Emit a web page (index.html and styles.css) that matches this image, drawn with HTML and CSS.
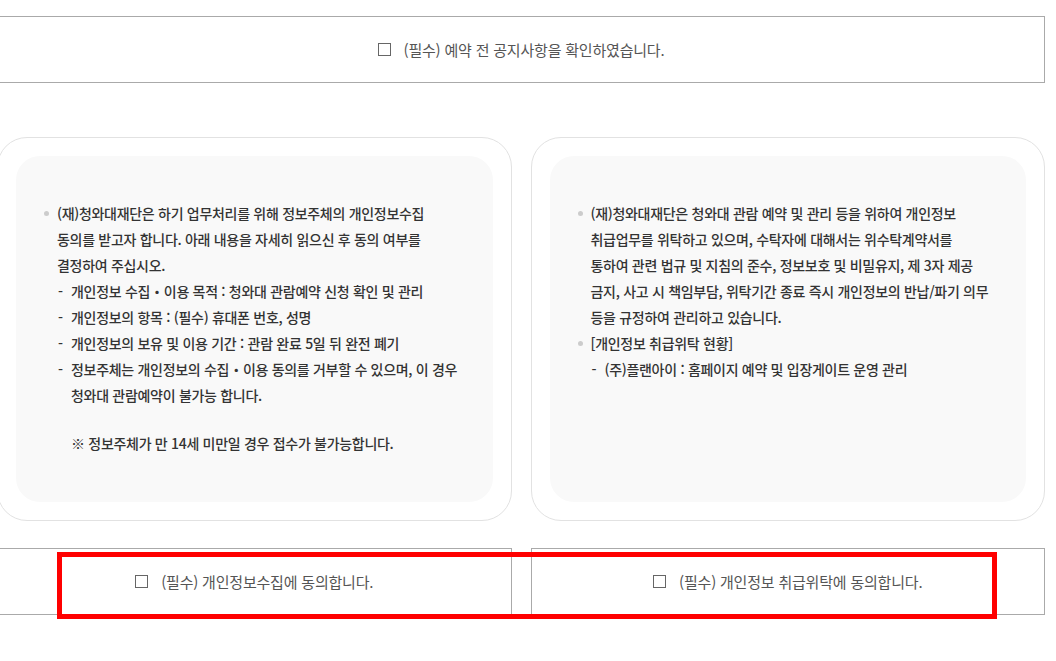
FILE: index.html
```html
<!DOCTYPE html>
<html lang="ko">
<head>
  <meta charset="UTF-8" />
  <meta name="viewport" content="width=device-width, initial-scale=1" />
  <title>청와대 관람예약 – 약관 동의</title>
  <link rel="stylesheet" href="styles.css">
</head>
<body>

  <div class="wrap">
    <label class="agree agree-top">
      <input type="checkbox" class="check" />
      <span>(필수) 예약 전 공지사항을 확인하였습니다.</span>
    </label>

    <div class="terms">
      <div class="card">
        <div class="card-inner">
          <ul class="dot-list">
            <li>
              (재)청와대재단은 하기 업무처리를 위해 정보주체의 개인정보수집<br>
              동의를 받고자 합니다. 아래 내용을 자세히 읽으신 후 동의 여부를<br>
              결정하여 주십시오.
              <ul class="dash-list">
                <li>개인정보 수집・이용 목적 : 청와대 관람예약 신청 확인 및 관리</li>
                <li>개인정보의 항목 : (필수) 휴대폰 번호, 성명</li>
                <li>개인정보의 보유 및 이용 기간 : 관람 완료 5일 뒤 완전 폐기</li>
                <li>정보주체는 개인정보의 수집・이용 동의를 거부할 수 있으며, 이 경우<br>청와대 관람예약이 불가능 합니다.</li>
              </ul>
              <p class="note">※ 정보주체가 만 14세 미만일 경우 접수가 불가능합니다.</p>
            </li>
          </ul>
        </div>
      </div>

      <div class="card">
        <div class="card-inner">
          <ul class="dot-list">
            <li>
              (재)청와대재단은 청와대 관람 예약 및 관리 등을 위하여 개인정보<br>
              취급업무를 위탁하고 있으며, 수탁자에 대해서는 위수탁계약서를<br>
              통하여 관련 법규 및 지침의 준수, 정보보호 및 비밀유지, 제 3자 제공<br>
              금지, 사고 시 책임부담, 위탁기간 종료 즉시 개인정보의 반납/파기 의무<br>
              등을 규정하여 관리하고 있습니다.
            </li>
            <li>
              [개인정보 취급위탁 현황]
              <ul class="dash-list">
                <li>(주)플랜아이 : 홈페이지 예약 및 입장게이트 운영 관리</li>
              </ul>
            </li>
          </ul>
        </div>
      </div>
    </div>

    <div class="agree-row">
      <label class="agree">
        <input type="checkbox" class="check" />
        <span>(필수) 개인정보수집에 동의합니다.</span>
      </label>
      <label class="agree">
        <input type="checkbox" class="check" />
        <span>(필수) 개인정보 취급위탁에 동의합니다.</span>
      </label>
    </div>
  </div>

  <div class="highlight"></div>

</body>
</html>
```

FILE: styles.css
```css
body {
  font-family: "Noto Sans CJK KR", "Noto Sans", sans-serif;
  background: #fff;
  color: #333;
  margin: 0;
  padding: 0;
  overflow: hidden;
}

.wrap {
  width: 1048px;
  margin-left: -3px;
  padding-top: 16px;
}

/* agreement boxes */
.agree {
  display: flex;
  align-items: center;
  justify-content: center;
  gap: 13px;
  height: 67px;
  box-sizing: border-box;
  border: 1px solid #aaa;
  font-size: 15px;
  letter-spacing: -0.2px;
  color: #555;
  cursor: pointer;
}

.check {
  appearance: none;
  -webkit-appearance: none;
  width: 13px;
  height: 13px;
  margin: 0;
  border: 1px solid #666;
  background: #fff;
  flex-shrink: 0;
}

.agree-row {
  display: grid;
  grid-template-columns: 1fr 1fr;
  gap: 19px;
  margin-top: 27px;
}

/* terms cards */
.terms {
  display: grid;
  grid-template-columns: 1fr 1fr;
  gap: 19px;
  margin-top: 54px;
}

.card {
  border: 1px solid #e2e2e2;
  border-radius: 30px;
  padding: 18px;
  background: #fff;
}

.card-inner {
  height: 100%;
  box-sizing: border-box;
  background: #f9f9f9;
  border-radius: 24px;
  padding: 44px 12px 46px 41px;
  font-size: 14px;
  font-weight: 500;
  letter-spacing: -0.3px;
  line-height: 26px;
  color: #333;
}

.dot-list,
.dash-list {
  list-style: none;
  margin: 0;
  padding: 0;
}

.dot-list > li {
  position: relative;
}

.dot-list > li::before {
  content: "";
  position: absolute;
  left: -13px;
  top: 11px;
  width: 5px;
  height: 5px;
  border-radius: 50%;
  background: #ccc;
}

.dash-list > li {
  position: relative;
  padding-left: 14px;
}

.dash-list > li::before {
  content: "-";
  position: absolute;
  left: 1px;
  top: 0;
}

.note {
  margin: 22px 0 0;
  padding-left: 14px;
}

/* red marker drawn over the two agreement boxes */
.highlight {
  position: absolute;
  left: 57px;
  top: 552px;
  width: 940px;
  height: 67px;
  box-sizing: border-box;
  border: 5px solid #ff0000;
  pointer-events: none;
}
```
